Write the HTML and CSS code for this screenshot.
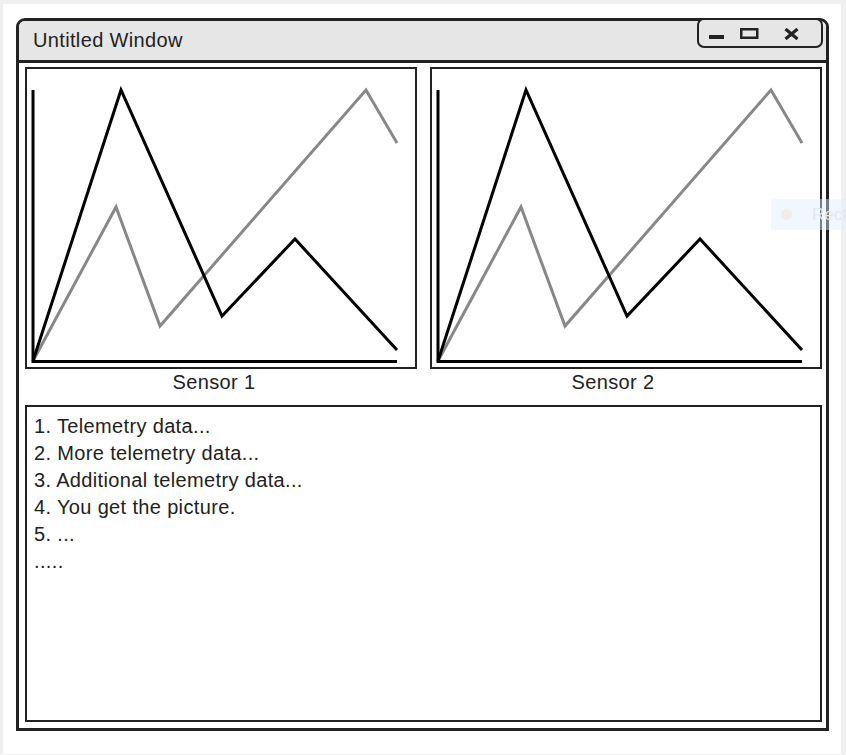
FILE: index.html
```html
<!DOCTYPE html>
<html lang="en">
<head>
    <meta charset="UTF-8">
    <meta name="viewport" content="width=device-width, initial-scale=1.0">
    <title>Untitled Window</title>
    <link rel="stylesheet" href="styles.css">
</head>
<body>
    <div class="page">
        <div class="window">
            <!-- Barra de título -->
            <div class="titlebar">
                <span class="title">Untitled Window</span>
                <div class="controls">
                    <svg width="17" height="12" viewBox="0 0 17 12"><rect x="1" y="7" width="15" height="4" fill="#222"/></svg>
                    <svg width="19" height="12" viewBox="0 0 19 12"><rect x="1.25" y="1.25" width="16" height="8.5" fill="none" stroke="#222" stroke-width="2.5"/></svg>
                    <svg width="15" height="12" viewBox="0 0 15 12"><path d="M1.5 1 L13.5 11 M13.5 1 L1.5 11" stroke="#222" stroke-width="3.2"/></svg>
                </div>
            </div>

            <div class="content">
                <!-- Gráficos dos sensores -->
                <div class="charts">
                    <div class="sensor">
                        <div class="chart">
                            <svg width="388" height="298" viewBox="0 0 388 298">
                                <polyline points="6,292 89,138 133,257 339,21 370,74" fill="none" stroke="#888" stroke-width="3"/>
                                <polyline points="6,292 94,21 195,247 268,170 370,281" fill="none" stroke="#000" stroke-width="3"/>
                                <path d="M6 21 V292.5 H370" fill="none" stroke="#000" stroke-width="3"/>
                            </svg>
                        </div>
                        <div class="label label-first">Sensor 1</div>
                    </div>
                    <div class="sensor">
                        <div class="chart">
                            <svg width="388" height="298" viewBox="0 0 388 298">
                                <polyline points="6,292 89,138 133,257 339,21 370,74" fill="none" stroke="#888" stroke-width="3"/>
                                <polyline points="6,292 94,21 195,247 268,170 370,281" fill="none" stroke="#000" stroke-width="3"/>
                                <path d="M6 21 V292.5 H370" fill="none" stroke="#000" stroke-width="3"/>
                            </svg>
                        </div>
                        <div class="label label-second">Sensor 2</div>
                    </div>
                </div>

                <!-- Lista de telemetria -->
                <div class="log">
                    <div>1. Telemetry data...</div>
                    <div>2. More telemetry data...</div>
                    <div>3. Additional telemetry data...</div>
                    <div>4. You get the picture.</div>
                    <div>5. ...</div>
                    <div>.....</div>
                </div>
            </div>
        </div>
    </div>

    <!-- Marcador flutuante -->
    <div class="ghost">
        <span class="ghost-dot"></span>
        <span class="ghost-text">Rect</span>
    </div>
</body>
</html>
```

FILE: styles.css
```css
/* Corpo da página */
body {
    margin: 0;
    background-color: #f0f0f0;
    font-family: "Liberation Sans", Arial, sans-serif;
    color: #222;
}

.page {
    margin: 4px 5px 1px 3px;
    height: 750px;
    box-sizing: border-box;
    padding: 14px 0 0 13px;
    background-color: #fff;
}

/* Janela */
.window {
    width: 813px;
    height: 713px;
    box-sizing: border-box;
    border: 3px solid #222;
    border-radius: 9px 9px 0 0;
    display: flex;
    flex-direction: column;
    position: relative;
}

.titlebar {
    height: 38px;
    flex: none;
    background-color: #e6e6e6;
    border-bottom: 3px solid #222;
    border-radius: 6px 6px 0 0;
    display: flex;
    align-items: center;
    padding-left: 14px;
    padding-bottom: 1px;
}

.title {
    font-size: 20px;
    letter-spacing: 0.35px;
    color: #222;
}

.controls {
    position: absolute;
    top: -3px;
    right: 3px;
    width: 126px;
    height: 30px;
    box-sizing: border-box;
    border: 2.5px solid #222;
    border-radius: 7px;
    background-color: #e6e6e6;
    display: flex;
    align-items: flex-start;
    padding: 8px 0 0 9px;
    gap: 15px;
}

.controls svg:last-child {
    margin-left: 10px;
}

/* Conteúdo */
.content {
    flex: 1;
    display: flex;
    flex-direction: column;
    padding: 4px 4px 6px 6px;
}

.charts {
    display: grid;
    grid-template-columns: 392px 392px;
    gap: 13px;
}

.chart {
    height: 302px;
    box-sizing: border-box;
    border: 2px solid #222;
}

.chart svg {
    display: block;
}

.label {
    text-align: center;
    font-size: 20px;
    letter-spacing: 0.35px;
    line-height: 27px;
}

.label-first {
    padding-right: 14px;
}

.label-second {
    padding-right: 26px;
}

.log {
    flex: 1;
    margin-top: 9px;
    border: 2px solid #222;
    padding: 6px 7px 5px;
    font-size: 20px;
    letter-spacing: 0.35px;
    line-height: 27px;
}

/* Marcador flutuante */
.ghost {
    position: absolute;
    left: 771px;
    top: 199px;
    width: 90px;
    height: 31px;
    background-color: rgba(225, 238, 255, 0.45);
    display: flex;
    align-items: center;
}

.ghost-dot {
    width: 11px;
    height: 11px;
    border-radius: 50%;
    background-color: #f3ece6;
    margin-left: 10px;
}

.ghost-text {
    margin-left: 20px;
    font-size: 17px;
    color: #e4e7ec;
}
```
